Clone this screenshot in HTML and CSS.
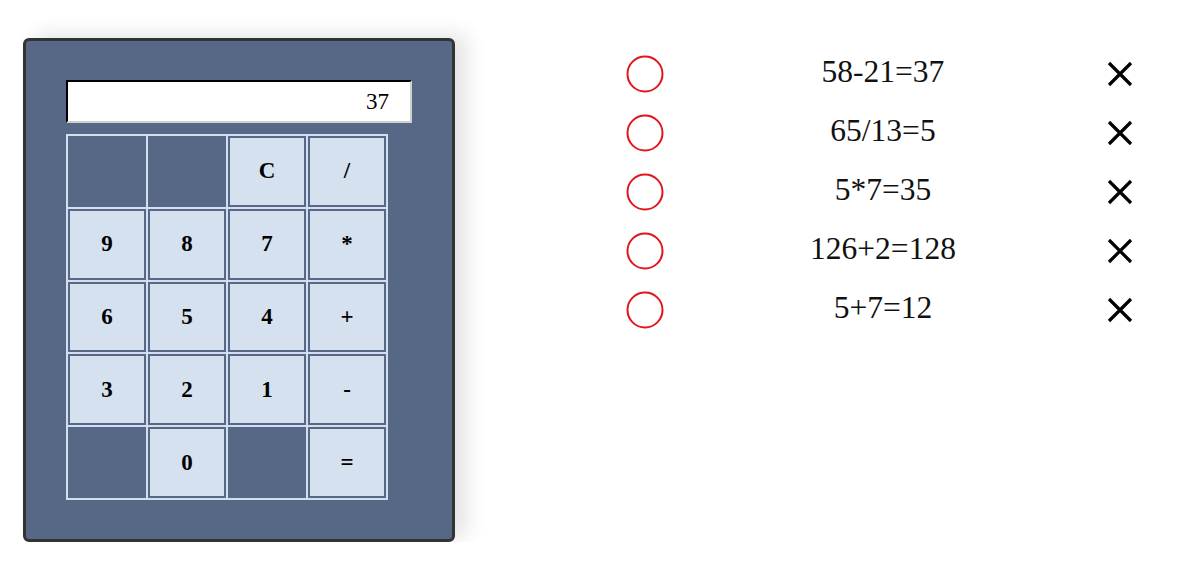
FILE: index.html
```html
<!DOCTYPE html>
<html>
<head>
<meta charset="utf-8">
<link rel="stylesheet" href="styles.css">
</head>
<body>
<div class="page">
  <div class="calc">
    <div class="display">37</div>
    <div class="keys">
      <div class="cell"></div>
      <div class="cell"></div>
      <div class="cell"><button class="key">C</button></div>
      <div class="cell"><button class="key">/</button></div>
      <div class="cell"><button class="key">9</button></div>
      <div class="cell"><button class="key">8</button></div>
      <div class="cell"><button class="key">7</button></div>
      <div class="cell"><button class="key">*</button></div>
      <div class="cell"><button class="key">6</button></div>
      <div class="cell"><button class="key">5</button></div>
      <div class="cell"><button class="key">4</button></div>
      <div class="cell"><button class="key">+</button></div>
      <div class="cell"><button class="key">3</button></div>
      <div class="cell"><button class="key">2</button></div>
      <div class="cell"><button class="key">1</button></div>
      <div class="cell"><button class="key">-</button></div>
      <div class="cell"></div>
      <div class="cell"><button class="key">0</button></div>
      <div class="cell"></div>
      <div class="cell"><button class="key">=</button></div>
    </div>
  </div>
  <ul class="history">
    <li class="row">
      <svg class="ring" width="38" height="38" viewBox="0 0 38 38"><circle cx="19" cy="19" r="17.5" fill="none" stroke="#e0161c" stroke-width="2"/></svg>
      <span class="expr">58-21=37</span>
      <svg class="cross" width="26" height="26" viewBox="0 0 26 26"><path d="M2 2 L24 24 M24 2 L2 24" stroke="#000" stroke-width="3.2" fill="none"/></svg>
    </li>
    <li class="row">
      <svg class="ring" width="38" height="38" viewBox="0 0 38 38"><circle cx="19" cy="19" r="17.5" fill="none" stroke="#e0161c" stroke-width="2"/></svg>
      <span class="expr">65/13=5</span>
      <svg class="cross" width="26" height="26" viewBox="0 0 26 26"><path d="M2 2 L24 24 M24 2 L2 24" stroke="#000" stroke-width="3.2" fill="none"/></svg>
    </li>
    <li class="row">
      <svg class="ring" width="38" height="38" viewBox="0 0 38 38"><circle cx="19" cy="19" r="17.5" fill="none" stroke="#e0161c" stroke-width="2"/></svg>
      <span class="expr">5*7=35</span>
      <svg class="cross" width="26" height="26" viewBox="0 0 26 26"><path d="M2 2 L24 24 M24 2 L2 24" stroke="#000" stroke-width="3.2" fill="none"/></svg>
    </li>
    <li class="row">
      <svg class="ring" width="38" height="38" viewBox="0 0 38 38"><circle cx="19" cy="19" r="17.5" fill="none" stroke="#e0161c" stroke-width="2"/></svg>
      <span class="expr">126+2=128</span>
      <svg class="cross" width="26" height="26" viewBox="0 0 26 26"><path d="M2 2 L24 24 M24 2 L2 24" stroke="#000" stroke-width="3.2" fill="none"/></svg>
    </li>
    <li class="row">
      <svg class="ring" width="38" height="38" viewBox="0 0 38 38"><circle cx="19" cy="19" r="17.5" fill="none" stroke="#e0161c" stroke-width="2"/></svg>
      <span class="expr">5+7=12</span>
      <svg class="cross" width="26" height="26" viewBox="0 0 26 26"><path d="M2 2 L24 24 M24 2 L2 24" stroke="#000" stroke-width="3.2" fill="none"/></svg>
    </li>
  </ul>
</div>
</body>
</html>
```

FILE: styles.css
```css
html, body {
  margin: 0;
  padding: 0;
  background: #fff;
  font-family: "Liberation Serif", "Times New Roman", serif;
}

.page {
  display: flex;
  align-items: flex-start;
}

.calc {
  margin: 38px 0 0 23px;
  padding: 39px 40px;
  box-sizing: border-box;
  width: 432px;
  height: 504px;
  background: #566885;
  border: 3px solid #333;
  border-radius: 6px;
  box-shadow: 12px -4px 20px rgba(0, 0, 0, 0.11);
  display: flex;
  flex-direction: column;
  gap: 11px;
}

.display {
  width: 346px;
  height: 43px;
  box-sizing: border-box;
  background: #fff;
  border-style: solid;
  border-width: 2px;
  border-color: #000 #d0d0d0 #d0d0d0 #000;
  font-family: "Liberation Serif", "Times New Roman", serif;
  font-size: 23px;
  line-height: 39px;
  text-align: right;
  padding-right: 21px;
  color: #000;
}

.keys {
  display: grid;
  grid-template-columns: repeat(4, 80px);
  grid-template-rows: repeat(5, 72.8px);
  width: 322px;
  box-sizing: border-box;
  border: 1px solid #d3dff0;
}

.cell {
  border: 1px solid #d3dff0;
  display: flex;
}

.key {
  flex: 1;
  margin: 0;
  padding: 0;
  background: #d6e1ef;
  border: 2px solid #566885;
  font-family: "Liberation Serif", "Times New Roman", serif;
  font-weight: bold;
  font-size: 23px;
  color: #000;
}

.history {
  list-style: none;
  margin: 44px 0 0 171px;
  padding: 0;
}

.row {
  display: grid;
  grid-template-columns: 38px 438px 31px;
  align-items: center;
  height: 59px;
}

.ring {
  display: block;
}

.expr {
  text-align: center;
  font-size: 31.5px;
  color: #111;
  margin-top: -3px;
}

.cross {
  display: block;
  justify-self: end;
}
```
